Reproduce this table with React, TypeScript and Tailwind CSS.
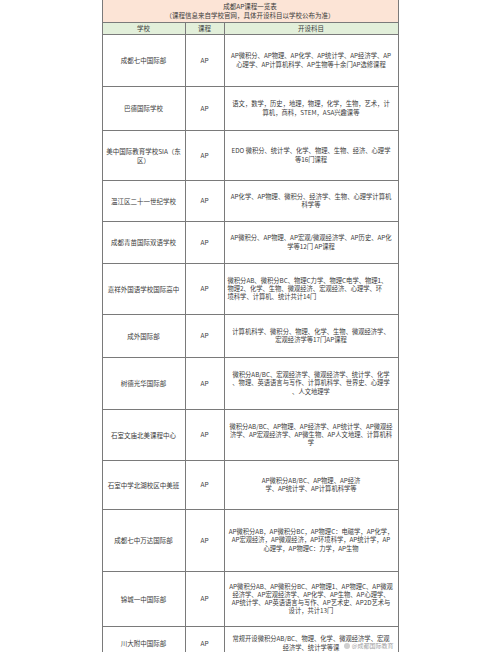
import React from 'react'

type Row = {
  school: string
  h: string
  lines: string[]
  left?: boolean
}

const rows: Row[] = [
  {
    school: '成都七中国际部',
    h: 'h-[52px]',
    lines: ['AP微积分、AP物理、AP化学、AP统计学、AP经济学、AP', '心理学、AP计算机科学、AP生物等十余门AP选修课程'],
  },
  {
    school: '巴德国际学校',
    h: 'h-[44px]',
    lines: ['语文，数学，历史，地理，物理，化学，生物，艺术，计', '算机，商科，STEM，ASA兴趣课等'],
  },
  {
    school: '美中国际教育学校SIA（东区）',
    h: 'h-[50px]',
    lines: ['EDO 微积分、统计学、化学、物理、生物、经济、心理学', '等16门课程'],
  },
  {
    school: '温江区二十一世纪学校',
    h: 'h-[41px]',
    lines: ['AP化学、AP物理、微积分、经济学、生物、心理学计算机', '科学等'],
  },
  {
    school: '成都青苗国际双语学校',
    h: 'h-[42px]',
    lines: ['AP微积分、AP物理、AP宏观/微观经济学、AP历史、AP化', '学等12门 AP课程'],
  },
  {
    school: '嘉祥外国语学校国际高中',
    h: 'h-[51px]',
    left: true,
    lines: ['微积分AB、微积分BC、物理C力学、物理C电学、物理1、', '物理2、化学、生物、微观经济、宏观经济、心理学、环', '境科学、计算机、统计共计14门'],
  },
  {
    school: '成外国际部',
    h: 'h-[43px]',
    lines: ['计算机科学、微积分、物理、化学、生物、微观经济学、', '宏观经济学等17门AP课程'],
  },
  {
    school: '树德光华国际部',
    h: 'h-[52px]',
    lines: ['微积分AB/BC、宏观经济学、微观经济学、统计学、化学', '、物理、英语语言与写作、计算机科学、世界史、心理学', '、人文地理学'],
  },
  {
    school: '石室文庙北美课程中心',
    h: 'h-[51px]',
    lines: ['微积分AB/BC、AP物理、AP经济学、AP统计学、AP微观经', '济学、AP宏观经济学、AP微生物、AP人文地理、计算机科', '学'],
  },
  {
    school: '石室中学北湖校区中美班',
    h: 'h-[49px]',
    lines: ['AP微积分AB/BC、AP物理、AP经济', '学、AP统计学、AP计算机科学等'],
  },
  {
    school: '成都七中万达国际部',
    h: 'h-[62px]',
    lines: ['AP微积分AB，AP微积分BC，AP物理C：电磁学，AP化学，', 'AP宏观经济，AP微观经济，AP环境科学，AP统计学，AP', '心理学，AP物理C：力学，AP生物'],
  },
  {
    school: '锦城一中国际部',
    h: 'h-[55px]',
    lines: ['AP微积分AB、AP微积分BC、AP物理1、AP物理C、AP微观', '经济学、AP宏观经济学、AP化学、AP生物、AP心理学、', 'AP统计学、AP英语语言与写作、AP艺术史、AP2D艺术与', '设计，共计13门'],
  },
  {
    school: '川大附中国际部',
    h: 'h-[34px]',
    lines: ['常规开设微积分AB/BC、物理、化学、微观经济学、宏观', '经济学、统计学等课'],
  },
]

function App() {
  return (
    <div className="min-h-screen bg-white flex justify-center font-['Noto_Sans_CJK_SC',sans-serif] text-[#3a3a3a]">
      <div className="w-[297px] border-x border-[#7a7a7a]">
        {/* 标题 */}
        <div className="h-[23px] bg-[#fce4d6] border-b border-[#7a7a7a] flex flex-col items-center justify-center text-[6.5px] leading-[9px]">
          <div>成都AP课程一览表</div>
          <div>（课程信息来自学校官网，具体开设科目以学校公布为准）</div>
        </div>

        {/* 表头 */}
        <div className="h-[12px] bg-[#e2efda] border-b border-[#7a7a7a] grid grid-cols-[83px_39px_1fr] text-[6.5px] leading-[11px] text-center">
          <div className="border-r border-[#7a7a7a]">学校</div>
          <div className="border-r border-[#7a7a7a]">课程</div>
          <div>开设科目</div>
        </div>

        {rows.map((r, i) => (
          <div key={i} className={`${r.h} border-b border-[#7a7a7a] grid grid-cols-[83px_39px_1fr] relative`}>
            <div className="border-r border-[#7a7a7a] flex items-center justify-center text-center px-[2px] text-[6.5px] leading-[9px]">
              {r.school}
            </div>
            <div className="border-r border-[#7a7a7a] flex items-center justify-center text-[6.5px]">AP</div>
            <div className={`flex flex-col justify-center px-[3px] text-[6.3px] leading-[8.2px] ${r.left ? 'items-start' : 'items-center'}`}>
              {r.lines.map((l, j) => (
                <div key={j} className="whitespace-nowrap">{l}</div>
              ))}
            </div>
            {i === rows.length - 1 && (
              <div className="absolute right-[4px] top-[14px] flex items-center gap-[2px] text-[6px] text-[#a0a0a0]">
                <span className="w-[6px] h-[6px] rounded-full bg-[#cfcfcf]"></span>
                <span>@成都国际教育</span>
              </div>
            )}
          </div>
        ))}
      </div>
    </div>
  )
}

export default App
